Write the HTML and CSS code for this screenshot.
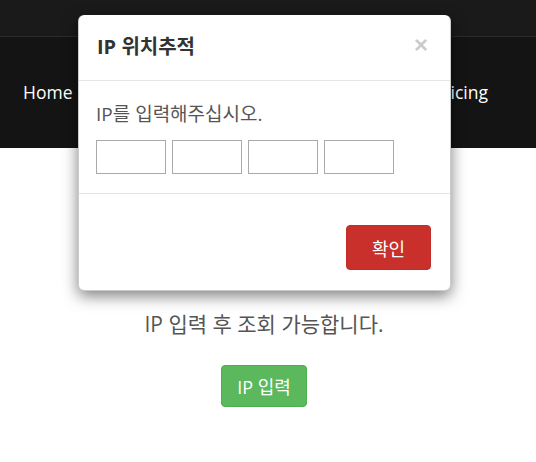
FILE: index.html
```html
<!DOCTYPE html>
<html lang="ko">
<head>
    <meta charset="UTF-8">
    <meta name="viewport" content="width=device-width, initial-scale=1.0">
    <title>IP 위치추적</title>
    <link rel="stylesheet" href="styles.css">
</head>
<body>
    <div class="topbar"></div>
    <nav class="navbar">
        <a href="#">Home</a>
        <a href="#">Pricing</a>
    </nav>

    <div class="content">
        <p class="hint">IP 입력 후 조회 가능합니다.</p>
        <button class="btn btn-success">IP 입력</button>
    </div>

    <!-- IP modal -->
    <div class="modal">
        <div class="modal-content">
            <div class="modal-header">
                <h4 class="modal-title">IP 위치추적</h4>
                <button class="close">&times;</button>
            </div>
            <div class="modal-body">
                <p>IP를 입력해주십시오.</p>
                <div class="ip-inputs">
                    <input type="text" maxlength="3">
                    <input type="text" maxlength="3">
                    <input type="text" maxlength="3">
                    <input type="text" maxlength="3">
                </div>
            </div>
            <div class="modal-footer">
                <button class="btn btn-danger">확인</button>
            </div>
        </div>
    </div>
</body>
</html>
```

FILE: styles.css
```css
body {
    margin: 0;
    font-family: "Open Sans", "Noto Sans CJK KR", sans-serif;
    color: #555;
    background: #fff;
}

.topbar {
    height: 36px;
    background: #1a1a1a;
    border-bottom: 1px solid #2a2a2a;
}

.navbar {
    height: 111px;
    background: #141414;
    display: flex;
    align-items: center;
    justify-content: space-between;
    padding: 0 48px 0 23px;
}

.navbar a {
    color: #fff;
    text-decoration: none;
    font-size: 17.5px;
    padding-bottom: 2px;
}

.content {
    text-align: center;
    padding-top: 163px;
    padding-right: 8px;
}

.hint {
    margin: 0 0 27px;
    font-size: 21px;
    line-height: 27px;
    color: #555;
}

.btn {
    font-family: inherit;
    border: 1px solid transparent;
    border-radius: 4px;
    color: #fff;
    cursor: pointer;
}

.btn-success {
    background: #5cb85c;
    border-color: #4cae4c;
    font-size: 18px;
    padding: 0 15px;
    height: 42px;
}

.btn-danger {
    background: #c9302c;
    border-color: #c12e2a;
    font-size: 18px;
    padding: 0 25px;
    height: 45px;
}

/* modal */
.modal {
    position: absolute;
    top: 15px;
    left: 78px;
    width: 373px;
}

.modal-content {
    background: #fff;
    border: 1px solid rgba(0, 0, 0, 0.2);
    border-top: none;
    border-radius: 6px;
    box-shadow: 0 5px 15px rgba(0, 0, 0, 0.5);
}

.modal-header {
    display: flex;
    align-items: center;
    justify-content: space-between;
    height: 66px;
    padding: 0 20px 0 18px;
    box-sizing: border-box;
    border-bottom: 1px solid #e5e5e5;
}

.modal-title {
    margin: 0 0 5px;
    font-size: 20px;
    font-weight: bold;
    color: #333;
}

.close {
    background: none;
    border: none;
    padding: 0;
    font-family: "Liberation Sans", sans-serif;
    font-size: 24px;
    font-weight: bold;
    line-height: 1;
    color: #000;
    opacity: 0.2;
    margin: 0 2px 5px 0;
}

.modal-body {
    padding: 19px 17px 19px;
}

.modal-body p {
    margin: 0 0 12px;
    font-size: 19px;
    line-height: 28px;
    color: #555;
}

.ip-inputs {
    display: flex;
    gap: 6px;
}

.ip-inputs input {
    width: 70px;
    height: 34px;
    box-sizing: border-box;
    border: 1px solid #aaa;
    margin: 0;
    padding: 0 4px;
}

.modal-footer {
    display: flex;
    justify-content: flex-end;
    padding: 31px 19px 20px;
    border-top: 1px solid #e5e5e5;
}
```
